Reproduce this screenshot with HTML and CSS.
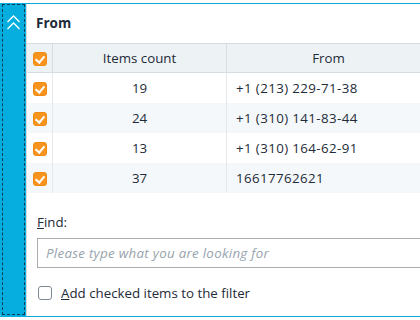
FILE: index.html
```html
<!DOCTYPE html>
<html lang="en">
  <head>
    <meta charset="UTF-8" />
    <meta name="viewport" content="width=device-width, initial-scale=1.0" />
    <title>Filter</title>
    <link rel="stylesheet" href="styles.css">
  </head>
  <body>
    <div class="popup">
      <div class="side">
        <div class="focus">
          <svg class="chevrons" width="15" height="17" viewBox="0 0 15 17">
            <polyline points="1.5,8 7.5,2 13.5,8" />
            <polyline points="1.5,15 7.5,9 13.5,15" />
          </svg>
        </div>
      </div>

      <div class="main">
        <div class="title">From</div>

        <table class="grid">
          <tr class="head">
            <td class="chk"><span class="box on"></span></td>
            <td class="count">Items count</td>
            <td class="from">From</td>
          </tr>
          <tr>
            <td class="chk"><span class="box on"></span></td>
            <td class="count">19</td>
            <td class="val">+1 (213) 229-71-38</td>
          </tr>
          <tr class="alt">
            <td class="chk"><span class="box on"></span></td>
            <td class="count">24</td>
            <td class="val">+1 (310) 141-83-44</td>
          </tr>
          <tr>
            <td class="chk"><span class="box on"></span></td>
            <td class="count">13</td>
            <td class="val">+1 (310) 164-62-91</td>
          </tr>
          <tr class="alt">
            <td class="chk"><span class="box on"></span></td>
            <td class="count">37</td>
            <td class="val">16617762621</td>
          </tr>
        </table>

        <div class="find">
          <label class="find-label"><u>F</u>ind:</label>
          <div class="input"><span class="placeholder">Please type what you are looking for</span></div>
          <div class="add">
            <span class="box"></span>
            <span><u>A</u>dd checked items to the filter</span>
          </div>
        </div>
      </div>
    </div>
  </body>
</html>
```

FILE: styles.css
```css
body {
  margin: 0;
  overflow: hidden;
  background: #fff;
  font-family: "Open Sans", "Noto Sans", sans-serif;
  font-size: 13.3px;
  color: #1e2b38;
}
.popup {
  display: flex;
  margin-top: 3px;
  height: 312px;
  width: 430px;
  border-top: 1px solid #0aa6d8;
  border-bottom: 1px solid #0aa6d8;
}
.side {
  width: 26px;
  flex-shrink: 0;
  background: #06aedf;
  padding: 1px 1px 2px 2px;
  box-sizing: border-box;
  margin-top: -1px;
  margin-bottom: -1px;
  border-bottom-left-radius: 3px;
}
.focus {
  height: 100%;
  border: 1px dashed #0b3d55;
  box-sizing: border-box;
  display: flex;
  justify-content: center;
  padding-top: 9px;
}
.chevrons polyline {
  fill: none;
  stroke: #fff;
  stroke-width: 1.3;
}
.main {
  flex: 1;
  border-left: 1px solid #d5dde2;
}
.title {
  height: 39px;
  line-height: 39px;
  padding-left: 9px;
  font-weight: bold;
  font-size: 13.5px;
}
.grid {
  border-collapse: collapse;
  width: 100%;
}
.grid td {
  height: 30px;
  padding: 0;
}
.head td {
  background: #edf2f5;
  border-top: 1px solid #d5dde2;
  border-bottom: 1px solid #d5dde2;
  height: 28px;
}
.alt td {
  background: #f5f8fa;
}
.chk {
  width: 25px;
  border-right: 1px solid #e2e8ec;
  text-align: center;
}
.head .chk {
  border-right-color: #d5dde2;
}
.count {
  width: 173px;
  text-align: center;
  border-right: 1px solid #e2e8ec;
}
.head .count {
  border-right-color: #d5dde2;
}
.from {
  text-align: center;
  padding-right: 10px;
}
.val {
  padding-left: 9px !important;
  letter-spacing: 0.4px;
}
.box {
  display: inline-block;
  width: 12px;
  height: 12px;
  border: 1px solid #7d8a96;
  border-radius: 3px;
  vertical-align: middle;
  position: relative;
}
.box.on {
  background: #f7941e;
  border-color: #f08a12;
}
.box.on::after {
  content: "";
  position: absolute;
  left: 3px;
  top: 1px;
  width: 4px;
  height: 7px;
  border: solid #fff;
  border-width: 0 2px 2px 0;
  transform: rotate(40deg);
}
.find {
  padding: 20px 0 0 10px;
}
.find-label {
  display: block;
  line-height: 18px;
}
.input {
  margin-top: 7px;
  height: 28px;
  border: 1px solid #acacac;
  border-right: none;
  line-height: 28px;
  padding-left: 8px;
}
.placeholder {
  font-style: italic;
  color: #97a3ad;
  letter-spacing: 0.3px;
}
.add {
  display: flex;
  align-items: center;
  gap: 9px;
  margin-top: 16px;
  padding-left: 1px;
}
```
